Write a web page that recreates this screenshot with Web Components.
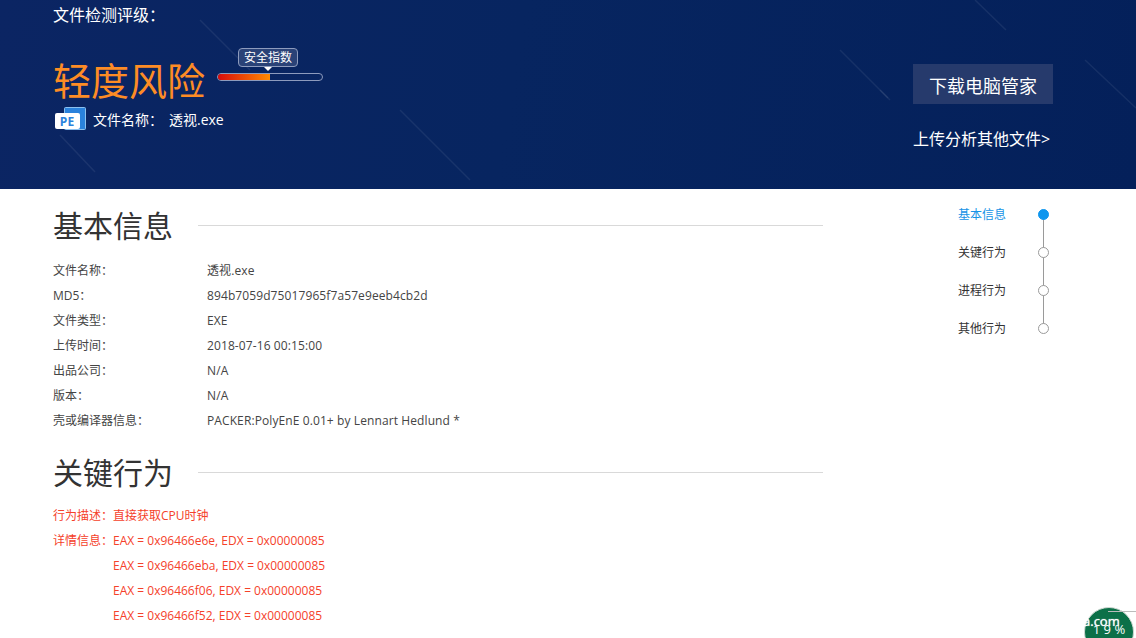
<!DOCTYPE html>
<html><head><meta charset="utf-8">
<style>
html,body{margin:0;padding:0;background:#fff;overflow:hidden;height:638px;width:1136px}
body{font-family:"Open Sans","Noto Sans CJK SC",sans-serif;}
</style></head><body>
<report-page></report-page>
<script>
const FF='"Open Sans","Noto Sans CJK SC",sans-serif';
class ReportHeader extends HTMLElement{constructor(){super();this.attachShadow({mode:'open'}).innerHTML=`
<style>
:host{display:block;height:189px;position:relative;overflow:hidden;color:#fff;background:linear-gradient(100deg,#0b2563 0%,#072560 45%,#04205a 100%);}
.deco{position:absolute;inset:0;width:100%;height:100%}
.wrap{position:relative;display:flex;justify-content:space-between;height:100%;padding:0 83px 0 53px;box-sizing:border-box}
.left{display:flex;flex-direction:column}
.t{font-size:16px;line-height:20px;margin-top:5px}
.row{display:flex;margin-top:27px;align-items:flex-start}
.lvl{font-size:38px;line-height:56px;color:#fd8c25;width:164px}
.gauge{width:106px;position:relative;height:36px;margin-top:-4px}
.tip{position:absolute;left:21px;top:0;width:58px;height:17px;border:1px solid #8d9bbd;border-radius:4px;font-size:12px;line-height:17px;text-align:center;background:#2a4277;box-sizing:content-box}
.tip::after{content:"";position:absolute;left:25px;top:18px;border:4px solid transparent;border-top:4px solid #fff;border-bottom:0}
.bar{position:absolute;left:0;top:25px;width:104px;height:6px;border:1px solid #8d9bbd;border-radius:4px;overflow:hidden}
.bar i{display:block;width:52px;height:6px;background:linear-gradient(90deg,#d80c0c,#ff8a00)}
.file{display:flex;align-items:center;font-size:14px;margin-top:-1px;margin-left:2px}
.file svg{margin-right:6px}
.file span+span{margin-left:6px}
.right{display:flex;flex-direction:column;align-items:flex-start;padding-top:64px}
.btn{width:140px;height:40px;background:#263a6c;font-size:18px;line-height:44px;text-align:center}
.up{font-size:16px;line-height:20px;margin-top:25px}
</style>
<svg class="deco" viewBox="0 0 1136 189"><g stroke="#fff" stroke-opacity=".07" stroke-width="1.5" fill="none">
<path d="M60 135L95 172"/><path d="M840 50L890 100"/><path d="M975 0L1006 30"/><path d="M1085 60L1136 108"/><path d="M880 90L888 98"/><path d="M200 20L250 70"/><path d="M400 110L470 180"/>
</g></svg>
<div class="wrap"><div class="left">
<div class="t">文件检测评级：</div>
<div class="row"><div class="lvl">轻度风险</div><div class="gauge"><div class="tip">安全指数</div><div class="bar"><i></i></div></div></div>
<div class="file"><svg width="32" height="24" viewBox="0 0 32 24"><rect x="9.5" y=".5" width="21" height="22" rx="1" fill="#2a82dc" stroke="#8cc0ee"/><rect x="0" y="6" width="25" height="16" rx="2" fill="#fff"/><text x="12" y="19" font-size="12" font-weight="700" fill="#2a82dc" text-anchor="middle" font-family="Open Sans">PE</text></svg><span>文件名称：</span><span>透视.exe</span></div>
</div>
<div class="right"><div class="btn">下载电脑管家</div><div class="up">上传分析其他文件&gt;</div></div>
</div>`}}
customElements.define('report-header',ReportHeader);

class SectionTitle extends HTMLElement{constructor(){super();this.attachShadow({mode:'open'}).innerHTML=`
<style>:host{display:flex;align-items:center;width:770px;height:48px;color:#333;font-size:30px;line-height:48px}
i{flex:1;height:1px;background:#d9d9d9;margin-left:25px;margin-top:-2px}</style><span><slot></slot></span><i></i>`}}
customElements.define('section-title',SectionTitle);

class InfoRow extends HTMLElement{constructor(){super();this.attachShadow({mode:'open'}).innerHTML=`
<style>:host{display:flex;font-size:12px;line-height:25px;color:#444}
b{font-weight:400;width:154px}
span{letter-spacing:.1px}</style><b>${this.getAttribute('k')}</b><span><slot></slot></span>`}}
customElements.define('info-row',InfoRow);

class BehaviorRow extends HTMLElement{constructor(){super();this.attachShadow({mode:'open'}).innerHTML=`
<style>:host{display:flex;font-size:12px;line-height:25px;color:#f5412a}
b{font-weight:400;width:60px;flex:none}</style><b>${this.getAttribute('k')||''}</b><span><slot></slot></span>`}}
customElements.define('behavior-row',BehaviorRow);

class SideNav extends HTMLElement{constructor(){super();const items=['基本信息','关键行为','进程行为','其他行为'];this.attachShadow({mode:'open'}).innerHTML=`
<style>:host{display:block;width:92px;font-size:12px;color:#333;position:absolute;left:958px;top:204px}
.i{display:flex;justify-content:space-between;align-items:center;height:20px;margin-bottom:18px;position:relative}
.i em{width:9px;height:9px;border:1px solid #9a9a9a;border-radius:50%;background:#fff;position:relative;margin-right:1px;z-index:1}
.i:not(:last-child)::after{content:"";position:absolute;right:6px;top:10px;height:38px;width:1px;background:#9a9a9a}
.on{color:#1693e6}.on em{background:#0e96ee;border-color:#0e96ee}</style>
${items.map((t,i)=>`<div class="i ${i?'':'on'}"><span>${t}</span><em></em></div>`).join('')}`}}
customElements.define('side-nav',SideNav);

class ScoreBadge extends HTMLElement{constructor(){super();this.attachShadow({mode:'open'}).innerHTML=`
<style>:host{display:block;position:absolute;left:1084px;top:606px;width:52px;height:32px;overflow:hidden}
.c{position:absolute;left:0;top:1px;width:50px;height:50px;border-radius:50%;background:#0c7048;border:1px solid #cfd8d2;box-sizing:border-box;color:#fff;text-align:center;font-size:13px;line-height:15px;padding-top:14px}
.w{position:absolute;left:-1px;top:7px;font-size:13px;color:#fff;line-height:16px;white-space:nowrap;text-shadow:0 0 1px #fff}
.l{position:absolute;left:24px;top:5px;right:0;height:1px;background:#bbb}</style>
<div class="c">1 9 %</div><div class="l"></div><div class="w">a.com</div>`}}
customElements.define('score-badge',ScoreBadge);

class ReportPage extends HTMLElement{constructor(){super();this.attachShadow({mode:'open'}).innerHTML=`
<style>:host{display:block;position:relative;width:1136px;height:638px;overflow:hidden;font-family:${FF}}
main{padding:13px 0 0 53px}
.list{margin-top:8px}
section-title.two{margin-top:16px}
.list.b{margin-top:6px}</style>
<report-header></report-header>
<main>
<section-title>基本信息</section-title>
<div class="list">
<info-row k="文件名称：">透视.exe</info-row>
<info-row k="MD5：">894b7059d75017965f7a57e9eeb4cb2d</info-row>
<info-row k="文件类型：">EXE</info-row>
<info-row k="上传时间：">2018-07-16 00:15:00</info-row>
<info-row k="出品公司：">N/A</info-row>
<info-row k="版本：">N/A</info-row>
<info-row k="壳或编译器信息：">PACKER:PolyEnE 0.01+ by Lennart Hedlund *</info-row>
</div>
<section-title class="two">关键行为</section-title>
<div class="list b">
<behavior-row k="行为描述：">直接获取CPU时钟</behavior-row>
<behavior-row k="详情信息：">EAX = 0x96466e6e, EDX = 0x00000085</behavior-row>
<behavior-row>EAX = 0x96466eba, EDX = 0x00000085</behavior-row>
<behavior-row>EAX = 0x96466f06, EDX = 0x00000085</behavior-row>
<behavior-row>EAX = 0x96466f52, EDX = 0x00000085</behavior-row>
</div>
</main>
<side-nav></side-nav>
<score-badge></score-badge>`}}
customElements.define('report-page',ReportPage);
</script>
</body></html>
